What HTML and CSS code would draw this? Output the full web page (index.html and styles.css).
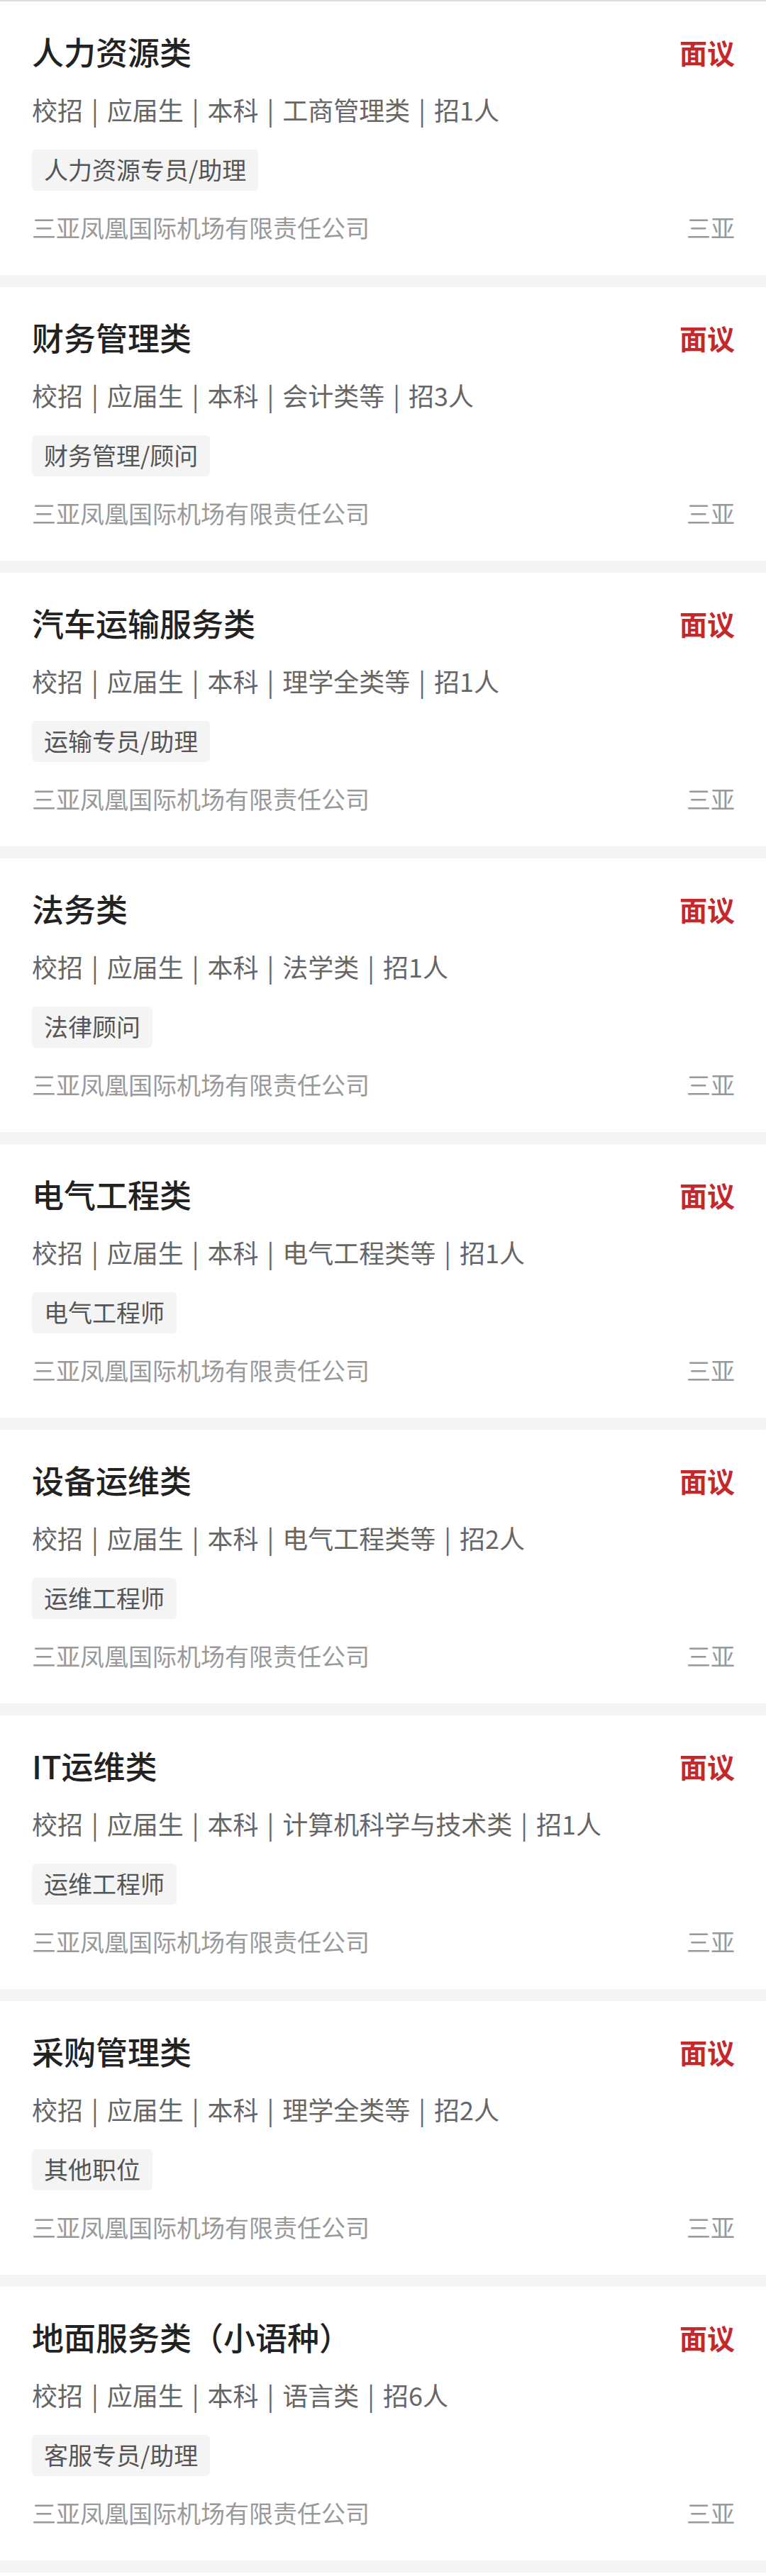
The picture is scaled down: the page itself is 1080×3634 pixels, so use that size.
FILE: index.html
```html
<!DOCTYPE html>
<html lang="zh-CN">
<head>
<meta charset="utf-8">
<title>职位列表</title>
<link rel="stylesheet" href="styles.css">
</head>
<body>
<div class="list">
  <div class="card">
    <div class="head"><span class="title">人力资源类</span><span class="salary">面议</span></div>
    <div class="info">校招<span class="sep">|</span>应届生<span class="sep">|</span>本科<span class="sep">|</span>工商管理类<span class="sep">|</span>招1人</div>
    <div class="tags"><span class="tag">人力资源专员/助理</span></div>
    <div class="foot"><span>三亚凤凰国际机场有限责任公司</span><span>三亚</span></div>
  </div>
  <div class="card">
    <div class="head"><span class="title">财务管理类</span><span class="salary">面议</span></div>
    <div class="info">校招<span class="sep">|</span>应届生<span class="sep">|</span>本科<span class="sep">|</span>会计类等<span class="sep">|</span>招3人</div>
    <div class="tags"><span class="tag">财务管理/顾问</span></div>
    <div class="foot"><span>三亚凤凰国际机场有限责任公司</span><span>三亚</span></div>
  </div>
  <div class="card">
    <div class="head"><span class="title">汽车运输服务类</span><span class="salary">面议</span></div>
    <div class="info">校招<span class="sep">|</span>应届生<span class="sep">|</span>本科<span class="sep">|</span>理学全类等<span class="sep">|</span>招1人</div>
    <div class="tags"><span class="tag">运输专员/助理</span></div>
    <div class="foot"><span>三亚凤凰国际机场有限责任公司</span><span>三亚</span></div>
  </div>
  <div class="card">
    <div class="head"><span class="title">法务类</span><span class="salary">面议</span></div>
    <div class="info">校招<span class="sep">|</span>应届生<span class="sep">|</span>本科<span class="sep">|</span>法学类<span class="sep">|</span>招1人</div>
    <div class="tags"><span class="tag">法律顾问</span></div>
    <div class="foot"><span>三亚凤凰国际机场有限责任公司</span><span>三亚</span></div>
  </div>
  <div class="card">
    <div class="head"><span class="title">电气工程类</span><span class="salary">面议</span></div>
    <div class="info">校招<span class="sep">|</span>应届生<span class="sep">|</span>本科<span class="sep">|</span>电气工程类等<span class="sep">|</span>招1人</div>
    <div class="tags"><span class="tag">电气工程师</span></div>
    <div class="foot"><span>三亚凤凰国际机场有限责任公司</span><span>三亚</span></div>
  </div>
  <div class="card">
    <div class="head"><span class="title">设备运维类</span><span class="salary">面议</span></div>
    <div class="info">校招<span class="sep">|</span>应届生<span class="sep">|</span>本科<span class="sep">|</span>电气工程类等<span class="sep">|</span>招2人</div>
    <div class="tags"><span class="tag">运维工程师</span></div>
    <div class="foot"><span>三亚凤凰国际机场有限责任公司</span><span>三亚</span></div>
  </div>
  <div class="card">
    <div class="head"><span class="title">IT运维类</span><span class="salary">面议</span></div>
    <div class="info">校招<span class="sep">|</span>应届生<span class="sep">|</span>本科<span class="sep">|</span>计算机科学与技术类<span class="sep">|</span>招1人</div>
    <div class="tags"><span class="tag">运维工程师</span></div>
    <div class="foot"><span>三亚凤凰国际机场有限责任公司</span><span>三亚</span></div>
  </div>
  <div class="card">
    <div class="head"><span class="title">采购管理类</span><span class="salary">面议</span></div>
    <div class="info">校招<span class="sep">|</span>应届生<span class="sep">|</span>本科<span class="sep">|</span>理学全类等<span class="sep">|</span>招2人</div>
    <div class="tags"><span class="tag">其他职位</span></div>
    <div class="foot"><span>三亚凤凰国际机场有限责任公司</span><span>三亚</span></div>
  </div>
  <div class="card">
    <div class="head"><span class="title">地面服务类（小语种）</span><span class="salary">面议</span></div>
    <div class="info">校招<span class="sep">|</span>应届生<span class="sep">|</span>本科<span class="sep">|</span>语言类<span class="sep">|</span>招6人</div>
    <div class="tags"><span class="tag">客服专员/助理</span></div>
    <div class="foot"><span>三亚凤凰国际机场有限责任公司</span><span>三亚</span></div>
  </div>
</div>
</body>
</html>
```
FILE: styles.css
```css
html, body {
  margin: 0;
  padding: 0;
  background: #ffffff;
}
body {
  font-family: "Noto Sans CJK SC", "Noto Sans", sans-serif;
  border-top: 2px solid #dcdcdc;
}
.list {
  display: flex;
  flex-direction: column;
  gap: 17px;
  padding-bottom: 17px;
  background: #f4f4f7;
}
.card {
  background: #ffffff;
  padding: 41px 44px 44px 45px;
  display: flex;
  flex-direction: column;
}
.head {
  display: flex;
  justify-content: space-between;
  align-items: center;
  height: 60px;
}
.title {
  font-size: 45px;
  line-height: 60px;
  font-weight: 500;
  color: #222222;
}
.salary {
  font-size: 39px;
  line-height: 60px;
  font-weight: 700;
  color: #c4282b;
}
.info {
  margin-top: 27px;
  font-size: 36px;
  line-height: 48px;
  color: #666666;
  white-space: nowrap;
}
.sep {
  display: inline-block;
  margin: 0 12px;
  color: #666666;
}
.tags {
  margin-top: 33px;
  display: flex;
}
.tag {
  height: 58px;
  line-height: 56px;
  padding: 0 17px;
  font-size: 34px;
  color: #555555;
  background: #f4f4f4;
  border-radius: 6px;
}
.foot {
  margin-top: 29px;
  display: flex;
  justify-content: space-between;
  font-size: 34px;
  line-height: 46px;
  color: #999999;
}
```
